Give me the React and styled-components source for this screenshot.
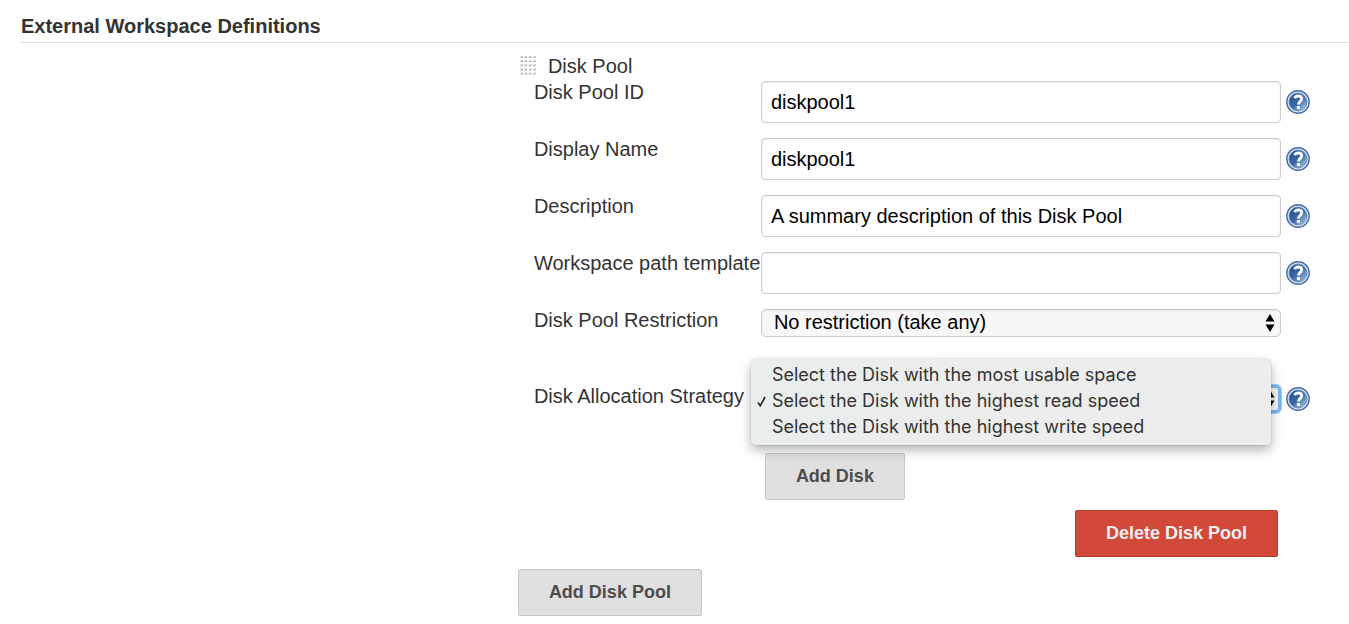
import React from "react";
import styled, { createGlobalStyle, css } from "styled-components";

const GlobalStyle = createGlobalStyle`
  *, *::before, *::after { box-sizing: border-box; }
  body {
    margin: 0;
    background: #fff;
    color: #333;
    font: 20px/24px "Liberation Sans", Helvetica, Arial, sans-serif;
  }
`;

const Page = styled.main`
  padding: 14px 0 8px 21px;
`;

const Heading = styled.h1`
  margin: 0;
  padding-bottom: 4px;
  border-bottom: 1px solid #ddd;
  font-size: 20px;
  line-height: 24px;
  font-weight: bold;
`;

const Section = styled.form`
  display: grid;
  grid-template-columns: 3fr 5fr;
  padding: 11px 3px 0 0;
`;

const Pools = styled.div`
  grid-column: 2;
`;

const PoolTitle = styled.div`
  display: flex;
  align-items: center;
  gap: 11px;
  height: 27px;
  padding: 0 0 4px 1px;
`;

const HandleIcon = styled.svg`
  display: block;
  width: 18px;
  height: 21px;
`;

const PoolBody = styled.div`
  display: flex;
  flex-direction: column;
  gap: 15px;
  padding: 0 36px 0 16px;
`;

const Row = styled.div`
  display: grid;
  grid-template-columns: 227px minmax(0, 1fr) 29px;
  margin-top: ${(p) => (p.$spaced ? "33px" : "0")};
`;

const Label = styled.label`
  line-height: 22px;
  white-space: nowrap;
`;

const control = css`
  display: block;
  width: 100%;
  margin: 0;
  border: 1px solid #ccc;
  font: inherit;
  color: #000;
`;

const TextInput = styled.input`
  ${control}
  height: 42px;
  padding: 0 9px;
  border-radius: 4px;
  background: #fff;
  box-shadow: inset 0 1px 2px rgba(0, 0, 0, 0.08);
  outline: none;
`;

const SelectBox = styled.div`
  position: relative;
`;

const Select = styled.select`
  ${control}
  appearance: none;
  height: 28px;
  padding: 0 30px 2px 12px;
  border-radius: 5px;
  background: #f7f7f7;
  box-shadow: inset 0 1px 2px rgba(0, 0, 0, 0.08);
  outline: none;
  ${(p) =>
    p.$active &&
    css`
      border-color: #6fb0f5;
      box-shadow: 0 0 0 1px #a5cffb, inset 0 0 0 2px #7bb5f3;
    `}
`;

const Arrows = styled.svg`
  position: absolute;
  top: 5px;
  right: 6px;
  width: 10px;
  height: 18px;
  pointer-events: none;
`;

const Menu = styled.ul`
  position: absolute;
  z-index: 1;
  top: -26px;
  left: -10px;
  width: 100%;
  margin: 0;
  padding: 3px 0 5px;
  list-style: none;
  border-radius: 5px;
  background: linear-gradient(100deg, #e9eded, #ededed 50%);
  box-shadow: 0 0 1px rgba(0, 0, 0, 0.5), 0 5px 12px rgba(0, 0, 0, 0.3);
`;

const MenuItem = styled.li`
  display: grid;
  grid-template-columns: 21px 1fr;
  align-items: center;
  height: 26px;
  font: 18px/26px Inter, "Liberation Sans", sans-serif;
  white-space: nowrap;
`;

const Check = styled.svg`
  width: 9px;
  height: 11px;
  margin-left: 6px;
  grid-column: 1;
`;

const MenuText = styled.span`
  grid-column: 2;
`;

const HelpButton = styled.button`
  justify-self: end;
  margin: ${(p) => (p.$compact ? "2px" : "9px")} 0 0;
  width: 24px;
  height: 24px;
  padding: 0;
  border: 0;
  background: none;
  cursor: pointer;

  svg {
    display: block;
  }
`;

const Button = styled.button`
  height: 47px;
  padding: 0 30px 2px;
  border: 1px solid ${(p) => (p.$danger ? "#b93b2c" : "#c8c8c8")};
  border-radius: 2px;
  background: ${(p) => (p.$danger ? "#d24939" : "#e0e0e0")};
  color: ${(p) => (p.$danger ? "#eee" : "#4d4d4d")};
  font: bold 18px/24px "Liberation Sans", Helvetica, Arial, sans-serif;
  white-space: nowrap;
  cursor: pointer;
`;

const Actions = styled.div`
  display: flex;
  justify-content: ${(p) => (p.$end ? "flex-end" : "flex-start")};
`;

const DiskActions = styled(Actions)`
  padding: 25px 0 0 231px;
`;

const DeleteActions = styled(Actions)`
  margin-top: -5px;
  padding-right: 32px;
`;

const PoolActions = styled(Actions)`
  margin-top: 12px;
`;

function DragHandle() {
  const dots = [];
  for (let y = 0; y < 5; y++) {
    for (let x = 0; x < 4; x++) {
      const px = 1 + x * 4.5;
      const py = 1 + y * 4.4;
      dots.push(
        <path key={`${x}-${y}`} d={`M${px} ${py + 2}h3v-2.5z`} fill="#a5a59f" />,
        <path key={`${x}-${y}s`} d={`M${px} ${py + 2}v-2h2z`} fill="#dedede" />
      );
    }
  }
  return <HandleIcon viewBox="0 0 19 22" aria-hidden="true">{dots}</HandleIcon>;
}

function Help({ compact, topic }) {
  return (
    <HelpButton type="button" $compact={compact} aria-label={`Help for ${topic}`}>
      <svg width="24" height="24" viewBox="0 0 24 24">
        <defs>
          <linearGradient id="help-fill" x1="0" y1="0" x2="1" y2="1">
            <stop offset="0.15" stopColor="#2b5595" />
            <stop offset="0.5" stopColor="#3b69a8" />
            <stop offset="0.9" stopColor="#a4bddd" />
          </linearGradient>
        </defs>
        <circle cx="12" cy="12" r="11.2" fill="#dce7f4" stroke="#4a6fa5" strokeWidth="1.4" />
        <circle cx="12" cy="12" r="9" fill="url(#help-fill)" stroke="#6388bb" strokeWidth="0.8" />
        <path
          d="M8.6 8.2C9.4 6.6 10.6 6 12.2 6c2.2 0 3.5 1.1 3.5 2.8 0 2.7-3.3 2.9-3.3 5.6"
          fill="none"
          stroke="#fff"
          strokeWidth="2.8"
        />
        <rect x="10.9" y="16" width="3" height="3" rx="0.5" fill="#fff" />
      </svg>
    </HelpButton>
  );
}

function UpDown() {
  return (
    <Arrows viewBox="0 0 10 18" aria-hidden="true">
      <path d="M5 0l4.5 7.5h-9zM5 18L.5 10.5h9z" fill="#000" />
    </Arrows>
  );
}

const fields = [
  { id: "pool-id", label: "Disk Pool ID", value: "diskpool1" },
  { id: "display-name", label: "Display Name", value: "diskpool1" },
  { id: "description", label: "Description", value: "A summary description of this Disk Pool" },
  { id: "path-template", label: "Workspace path template", value: "" },
];

const strategies = [
  "Select the Disk with the most usable space",
  "Select the Disk with the highest read speed",
  "Select the Disk with the highest write speed",
];

export default function App() {
  const selected = 1;
  return (
    <Page>
      <GlobalStyle />
      <Heading>External Workspace Definitions</Heading>
      <Section onSubmit={(e) => e.preventDefault()}>
        <Pools>
          <PoolTitle>
            <DragHandle />
            <span>Disk Pool</span>
          </PoolTitle>
          <PoolBody>
            {fields.map((f) => (
              <Row key={f.id}>
                <Label htmlFor={f.id}>{f.label}</Label>
                <TextInput id={f.id} type="text" defaultValue={f.value} />
                <Help topic={f.label} />
              </Row>
            ))}
            <Row>
              <Label htmlFor="restriction">Disk Pool Restriction</Label>
              <SelectBox>
                <Select id="restriction">
                  <option>No restriction (take any)</option>
                </Select>
                <UpDown />
              </SelectBox>
            </Row>
            <Row $spaced>
              <Label htmlFor="strategy">Disk Allocation Strategy</Label>
              <SelectBox>
                <Select id="strategy" $active defaultValue={strategies[selected]}>
                  {strategies.map((s) => (
                    <option key={s}>{s}</option>
                  ))}
                </Select>
                <UpDown />
                <Menu role="listbox" aria-label="Disk Allocation Strategy">
                  {strategies.map((s, i) => (
                    <MenuItem key={s} role="option" aria-selected={i === selected}>
                      {i === selected && (
                        <Check viewBox="0 0 9 11" aria-hidden="true">
                          <path d="M1 6.5L3.2 9.8 8 1" fill="none" stroke="#222" strokeWidth="1.6" />
                        </Check>
                      )}
                      <MenuText>{s}</MenuText>
                    </MenuItem>
                  ))}
                </Menu>
              </SelectBox>
              <Help compact topic="Disk Allocation Strategy" />
            </Row>
            <DiskActions>
              <Button type="button">Add Disk</Button>
            </DiskActions>
            <DeleteActions $end>
              <Button type="button" $danger>Delete Disk Pool</Button>
            </DeleteActions>
          </PoolBody>
          <PoolActions>
            <Button type="button">Add Disk Pool</Button>
          </PoolActions>
        </Pools>
      </Section>
    </Page>
  );
}
